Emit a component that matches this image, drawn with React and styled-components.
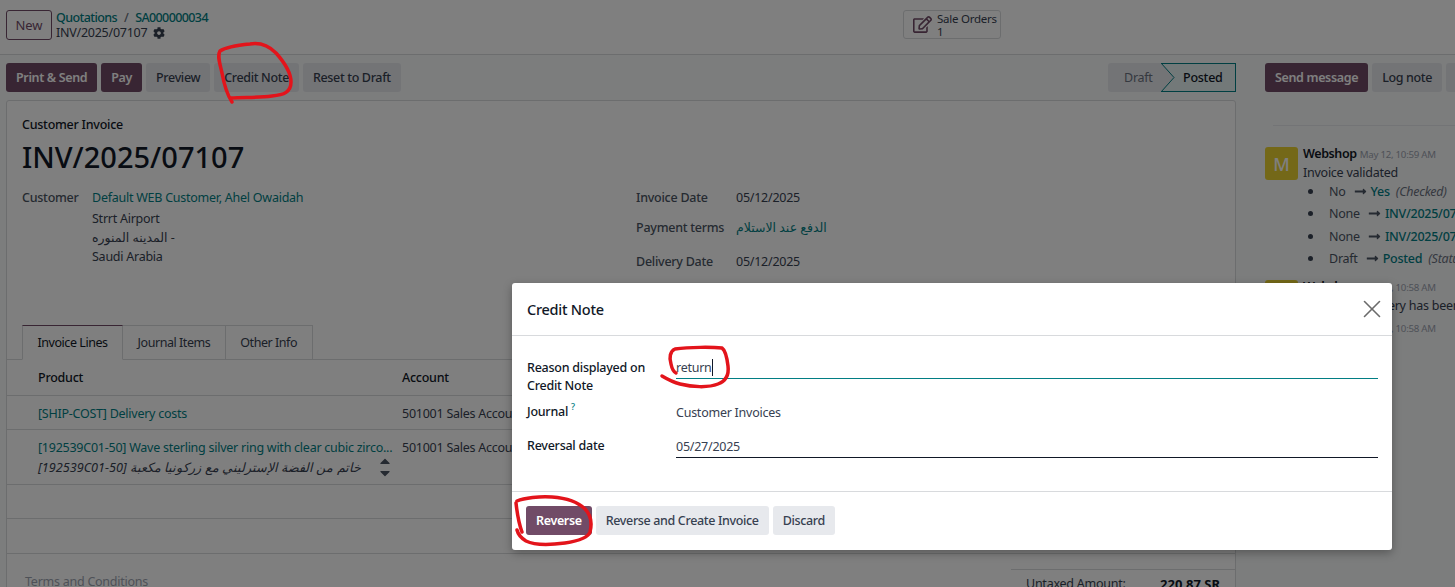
import styled, { createGlobalStyle } from "styled-components";
import { FaCog, FaRegEdit, FaLongArrowAltRight, FaCaretUp, FaCaretDown } from "react-icons/fa";
import { X } from "lucide-react";

const GlobalStyle = createGlobalStyle`
  html, body {
    margin: 0;
    padding: 0;
    background: #f9fafb;
  }
  * {
    box-sizing: border-box;
  }
`;

const tracked = [
  { from: "No", to: "Yes", note: "(Checked)" },
  { from: "None", to: "INV/2025/07107" },
  { from: "None", to: "INV/2025/07107" },
  { from: "Draft", to: "Posted", note: "(Status)" },
];

const App = () => {
  return (
    <Page>
      <GlobalStyle />
      <TopBar>
        <NewButton>New</NewButton>
        <Crumbs>
          <CrumbPath>
            <a>Quotations</a>
            <span>/</span>
            <a>SA000000034</a>
          </CrumbPath>
          <CrumbCurrent>
            INV/2025/07107 <FaCog size={12} />
          </CrumbCurrent>
        </Crumbs>
        <StatButton>
          <FaRegEdit size={19} />
          <div>
            Sale Orders
            <br />1
          </div>
        </StatButton>
      </TopBar>

      <Content>
        <Sheet>
          <ActionRow>
            <Actions>
              <Button $primary>Print &amp; Send</Button>
              <Button $primary>Pay</Button>
              <Button>Preview</Button>
              <Button>Credit Note</Button>
              <Button>Reset to Draft</Button>
            </Actions>
            <Status>
              <StatusDraft>Draft</StatusDraft>
              <StatusPosted>
                <StatusArrow width="14" height="29" viewBox="0 0 14 29">
                  <polygon points="0,0 13,14.5 0,29" fill="#e7e9ed" />
                  <polyline points="0,0 13,14.5 0,29" fill="none" stroke="#017e84" />
                </StatusArrow>
                Posted
              </StatusPosted>
            </Status>
          </ActionRow>

          <Card>
            <CardHead>
              <InvoiceType>Customer Invoice</InvoiceType>
              <InvoiceNumber>INV/2025/07107</InvoiceNumber>
            </CardHead>
            <InfoGrid>
              <CustomerBlock>
                <FieldLabel>Customer</FieldLabel>
                <Address>
                  <a>Default WEB Customer, Ahel Owaidah</a>
                  <span>Strrt Airport</span>
                  <span>المدينه المنوره -</span>
                  <span>Saudi Arabia</span>
                </Address>
              </CustomerBlock>
              <DatesBlock>
                <FieldLabel>Invoice Date</FieldLabel>
                <span>05/12/2025</span>
                <FieldLabel>Payment terms</FieldLabel>
                <a>الدفع عند الاستلام</a>
                <FieldLabel>Delivery Date</FieldLabel>
                <span>05/12/2025</span>
              </DatesBlock>
            </InfoGrid>

            <Tabs>
              <Tab $active>Invoice Lines</Tab>
              <Tab>Journal Items</Tab>
              <Tab>Other Info</Tab>
            </Tabs>

            <Row $height={36} $head>
              <ProductCell><strong>Product</strong></ProductCell>
              <strong>Account</strong>
            </Row>
            <Row $height={34}>
              <ProductCell><a>[SHIP-COST] Delivery costs</a></ProductCell>
              <span>501001 Sales Account</span>
            </Row>
            <Row $height={55}>
              <ProductCell>
                <a>[192539C01-50] Wave sterling silver ring with clear cubic zirco...</a>
                <ProductNote>
                  <em dir="rtl">خاتم من الفضة الإسترليني مع زركونيا مكعبة [192539C01-50]</em>
                  <Sorter>
                    <FaCaretUp size={16} />
                    <FaCaretDown size={16} />
                  </Sorter>
                </ProductNote>
              </ProductCell>
              <span>501001 Sales Account</span>
            </Row>
            <Row $height={34} />
            <Row $height={35} />

            <CardFoot>
              <Terms>Terms and Conditions</Terms>
              <Totals>
                <span>Untaxed Amount:</span>
                <strong>220.87 SR</strong>
              </Totals>
            </CardFoot>
          </Card>
        </Sheet>

        <Chatter>
          <Actions>
            <Button $primary>Send message</Button>
            <Button>Log note</Button>
            <Button>Activities</Button>
          </Actions>
          <ChatterRule />
          <Message>
            <Avatar>M</Avatar>
            <MessageBody>
              <MessageHead>
                <b>Webshop</b> <time>May 12, 10:59 AM</time>
              </MessageHead>
              <MessageText>Invoice validated</MessageText>
              <Changes>
                {tracked.map((item, i) => (
                  <li key={i}>
                    {item.from} <FaLongArrowAltRight size={13} /> <a>{item.to}</a>{" "}
                    {item.note && <em>{item.note}</em>}
                  </li>
                ))}
              </Changes>
            </MessageBody>
          </Message>
          <Message>
            <Avatar>M</Avatar>
            <MessageBody>
              <MessageHead>
                <b>Webshop</b> <time>May 12, 10:58 AM</time>
              </MessageHead>
              <MessageText>Customer delivery has been sent</MessageText>
            </MessageBody>
          </Message>
          <Message>
            <Avatar>M</Avatar>
            <MessageBody>
              <MessageHead>
                <b>Webshop</b> <time>May 12, 10:58 AM</time>
              </MessageHead>
            </MessageBody>
          </Message>
        </Chatter>
      </Content>

      <Backdrop>
        <Modal>
          <ModalHeader>
            <h4>Credit Note</h4>
            <X size={30} strokeWidth={1.3} />
          </ModalHeader>
          <ModalBody>
            <ModalLabel $wrapped>Reason displayed on Credit Note</ModalLabel>
            <InputLine $focus>
              <Typed>return</Typed>
            </InputLine>
            <ModalLabel>
              Journal <sup>?</sup>
            </ModalLabel>
            <PlainValue>Customer Invoices</PlainValue>
            <ModalLabel>Reversal date</ModalLabel>
            <InputLine>05/27/2025</InputLine>
          </ModalBody>
          <ModalFooter>
            <Button $primary>Reverse</Button>
            <Button>Reverse and Create Invoice</Button>
            <Button>Discard</Button>
          </ModalFooter>
        </Modal>
      </Backdrop>

      <Scribbles width="1455" height="587" viewBox="0 0 1455 587">
        <path d="M232 102 C228 96 224 84 222 73 C220 64 217 56 220 51 C226 47 240 45 250 44 C262 42 270 47 276 53 C284 62 291 72 291 82 C291 92 284 95 272 96 C258 98 244 97 231 98" />
        <path d="M662 376 C667 379 672 382 680 384 C692 387 708 388 718 384 C726 381 729 374 728 366 C727 358 725 350 722 348 C712 347 690 347 675 349 C670 351 669 358 671 364 C672 369 674 372 676 373" />
        <path d="M517 501 C524 498 540 496 552 497 C566 498 578 502 585 509 C591 515 592 524 590 532 C588 538 578 541 565 543 C550 545 534 545 526 541 C521 538 518 534 517 530 M516 503 C517 512 519 524 522 532" />
      </Scribbles>
    </Page>
  );
};

const Page = styled.div`
  position: relative;
  width: 1455px;
  height: 587px;
  overflow: hidden;
  background: #f9fafb;
  color: #374151;
  font-family: "Noto Sans", "DejaVu Sans", sans-serif;
  font-size: 12.5px;
  letter-spacing: -0.25px;

  a {
    color: #017e84;
  }
`;

const TopBar = styled.header`
  display: flex;
  align-items: flex-start;
  height: 55px;
  padding: 10px 0 0 6px;
  border-bottom: 1px solid #d8dadd;
  background: #fff;
`;

const NewButton = styled.button`
  width: 46px;
  height: 30px;
  border: 1px solid #714b67;
  border-radius: 3px;
  background: #fff;
  color: #714b67;
  font: inherit;
  font-size: 13px;
`;

const Crumbs = styled.div`
  width: 847px;
  margin-left: 4px;
  line-height: 15px;
`;

const CrumbPath = styled.div`
  display: flex;
  gap: 7px;
  font-weight: 500;
  letter-spacing: -0.6px;

  span {
    color: #6b7280;
  }
`;

const CrumbCurrent = styled.div`
  display: flex;
  align-items: center;
  gap: 6px;
`;

const StatButton = styled.div`
  display: flex;
  align-items: center;
  gap: 5px;
  width: 98px;
  height: 29px;
  padding-left: 9px;
  border: 1px solid #d8dadd;
  border-radius: 3px;
  font-size: 11.5px;
  line-height: 13px;

  svg {
    color: #714b67;
  }
`;

const Content = styled.div`
  display: grid;
  grid-template-columns: 1236px 1fr;
`;

const Sheet = styled.main`
  padding: 8px 0 0 6px;
`;

const ActionRow = styled.div`
  display: flex;
  justify-content: space-between;
  margin-bottom: 8px;
`;

const Actions = styled.div`
  display: flex;
  gap: 4px;
  flex-wrap: nowrap;
`;

const Button = styled.button`
  flex: none;
  height: 29px;
  padding: 0 10px;
  border: 0;
  border-radius: 3px;
  background: ${(p) => (p.$primary ? "#714b67" : "#e7e9ed")};
  color: ${(p) => (p.$primary ? "#fff" : "#374151")};
  font: inherit;
  letter-spacing: -0.35px;
  font-weight: ${(p) => (p.$primary ? 600 : 500)};
  white-space: nowrap;
`;

const Status = styled.div`
  display: flex;
  height: 29px;
`;

const StatusDraft = styled.div`
  display: flex;
  align-items: center;
  width: 53px;
  padding-left: 16px;
  border-radius: 3px 0 0 3px;
  background: #e7e9ed;
  color: #6b7280;
`;

const StatusPosted = styled.div`
  position: relative;
  display: flex;
  align-items: center;
  width: 75px;
  padding-left: 22px;
  border: 1px solid #017e84;
  border-left: 0;
  background: #e6f2f3;
  color: #111827;
  font-weight: 500;
`;

const StatusArrow = styled.svg`
  position: absolute;
  left: 0;
  top: -1px;
`;

const Card = styled.section`
  height: 600px;
  border: 1px solid #d8dadd;
  border-radius: 3px 3px 0 0;
  background: #fff;
`;

const CardHead = styled.div`
  padding: 16px 15px 0;
`;

const InvoiceType = styled.div`
  color: #111827;
  font-weight: 500;
  line-height: 16px;
`;

const InvoiceNumber = styled.h1`
  margin: 5px 0 0;
  color: #111827;
  font-size: 29px;
  font-weight: 500;
  letter-spacing: 0;
  line-height: 38px;
`;

const InfoGrid = styled.div`
  display: grid;
  grid-template-columns: 614px 1fr;
  height: 149px;
  padding: 12px 15px 0;
`;

const CustomerBlock = styled.div`
  display: grid;
  grid-template-columns: 70px 1fr;
  align-content: start;
`;

const FieldLabel = styled.div`
  color: #4b5563;
  font-weight: 500;
  line-height: 19px;
`;

const Address = styled.div`
  display: flex;
  flex-direction: column;
  line-height: 19px;

  a {
    margin-bottom: 2px;
  }
`;

const DatesBlock = styled.div`
  display: grid;
  grid-template-columns: 100px 1fr;
  grid-template-rows: 30px 34px 32px;
  line-height: 19px;
`;

const Tabs = styled.nav`
  display: flex;
  height: 35px;
  padding-left: 15px;
  border-bottom: 1px solid #d8dadd;
`;

const Tab = styled.div`
  display: flex;
  align-items: center;
  height: 35px;
  padding: 0 14.5px;
  border: 1px solid #d8dadd;
  border-left-width: ${(p) => (p.$active ? 1 : 0)}px;
  border-bottom-color: ${(p) => (p.$active ? "#fff" : "#d8dadd")};
  border-top-color: ${(p) => (p.$active ? "#714b67" : "#d8dadd")};
  background: #fff;
  color: ${(p) => (p.$active ? "#111827" : "#374151")};
  letter-spacing: -0.45px;
`;

const Row = styled.div`
  display: grid;
  grid-template-columns: 364px 1fr;
  align-items: ${(p) => (p.$height > 40 ? "start" : "center")};
  height: ${(p) => p.$height}px;
  padding: ${(p) => (p.$height > 40 ? "8px" : p.$head ? "0" : "1px")} 0 0 31px;
  border-bottom: 1px solid #d8dadd;
  line-height: 19px;
  white-space: nowrap;

  strong {
    color: #111827;
    font-weight: 500;
  }
`;

const ProductCell = styled.div`
  min-width: 0;
`;

const ProductNote = styled.div`
  display: flex;
  justify-content: space-between;
  align-items: center;
  margin-top: -2px;
  padding-right: 9px;

  em {
    font-size: 12.7px;
    letter-spacing: 0;
  }
`;

const Sorter = styled.div`
  display: flex;
  flex-direction: column;
  color: #4b5563;

  svg {
    margin: -2px 0;
  }
`;

const CardFoot = styled.div`
  display: flex;
  justify-content: space-between;
  padding: 15px 0 0 18px;
`;

const Terms = styled.div`
  padding-top: 4px;
  color: #9ca3af;
`;

const Totals = styled.div`
  display: flex;
  justify-content: space-between;
  width: 224px;
  height: 40px;
  padding: 5px 15px 0 15px;
  border-top: 1px solid #d8dadd;

  strong {
    color: #111827;
    font-size: 13px;
    letter-spacing: 0;
  }
`;

const Chatter = styled.aside`
  padding: 8px 0 0 29px;
  overflow: hidden;
  white-space: nowrap;
`;

const ChatterRule = styled.div`
  height: 1px;
  margin: 33px 0 21px 8px;
  background: #e7e9ed;
`;

const Message = styled.article`
  display: flex;
  gap: 5px;
  margin-bottom: 3px;
`;

const Avatar = styled.div`
  flex: none;
  display: flex;
  align-items: center;
  justify-content: center;
  width: 33px;
  height: 33px;
  border-radius: 3px;
  background: #e8d030;
  color: #fff;
  font-size: 18px;
  font-weight: 500;
`;

const MessageBody = styled.div`
  min-width: 0;
  color: #374151;
`;

const MessageHead = styled.div`
  line-height: 13px;

  b {
    font-weight: 600;
    color: #111827;
    letter-spacing: -0.4px;
  }

  time {
    color: #9ca3af;
    font-size: 9.7px;
  }
`;

const MessageText = styled.div`
  line-height: 24px;
`;

const Changes = styled.ul`
  margin: -4.5px 0 0;
  padding: 0 0 6.5px 26px;
  list-style: none;

  li {
    height: 22.5px;
    line-height: 22px;
    color: #4b5563;
  }

  li::before {
    content: "";
    display: inline-block;
    width: 5px;
    height: 5px;
    margin: 0 16px 2px -21px;
    border-radius: 50%;
    background: #374151;
  }

  a {
    font-weight: 500;
  }

  svg {
    vertical-align: -2px;
    margin: 0 1px 0 5px;
  }

  em {
    margin-left: 3px;
    color: #6b7280;
  }
`;

const Backdrop = styled.div`
  position: absolute;
  inset: 0;
  padding: 283px 0 0 512px;
  background: rgba(0, 0, 0, 0.5);
`;

const Modal = styled.div`
  width: 880px;
  height: 267px;
  border-radius: 3px;
  background: #fff;
  box-shadow: 0 3px 10px rgba(0, 0, 0, 0.3);
`;

const ModalHeader = styled.div`
  display: flex;
  align-items: center;
  justify-content: space-between;
  height: 53px;
  padding: 0 5px 0 15px;
  border-bottom: 1px solid #d8dadd;

  h4 {
    margin: 0;
    color: #111827;
    font-size: 14.5px;
    font-weight: 500;
  }

  svg {
    color: #6b6b6b;
  }
`;

const ModalBody = styled.div`
  display: grid;
  grid-template-columns: 149px 1fr;
  grid-template-rows: 45px 34px 36px;
  height: 155px;
  padding: 22px 14px 0 15px;
`;

const ModalLabel = styled.div`
  width: 125px;
  padding-top: ${(p) => (p.$wrapped ? "1px" : "0")};
  color: #111827;
  font-weight: 500;
  line-height: 18px;

  sup {
    color: #017e84;
    font-size: 9px;
    vertical-align: 6px;
    line-height: 0;
  }
`;

const InputLine = styled.div`
  height: 21px;
  padding-top: 1px;
  border-bottom: 1px solid ${(p) => (p.$focus ? "#017e84" : "#111827")};
  line-height: 18px;
`;

const Typed = styled.span`
  display: inline-block;
  height: 17px;
  border-right: 1px solid #111827;
`;

const PlainValue = styled.div`
  line-height: 20px;
`;

const ModalFooter = styled.div`
  display: flex;
  gap: 4px;
  align-items: center;
  height: 59px;
  padding: 0 14px 2px;
  border-top: 1px solid #d8dadd;
`;

const Scribbles = styled.svg`
  position: absolute;
  inset: 0;
  pointer-events: none;

  path {
    fill: none;
    stroke: #e3141b;
    stroke-width: 3.5;
    stroke-linecap: round;
    stroke-linejoin: round;
  }
`;

export default App;
